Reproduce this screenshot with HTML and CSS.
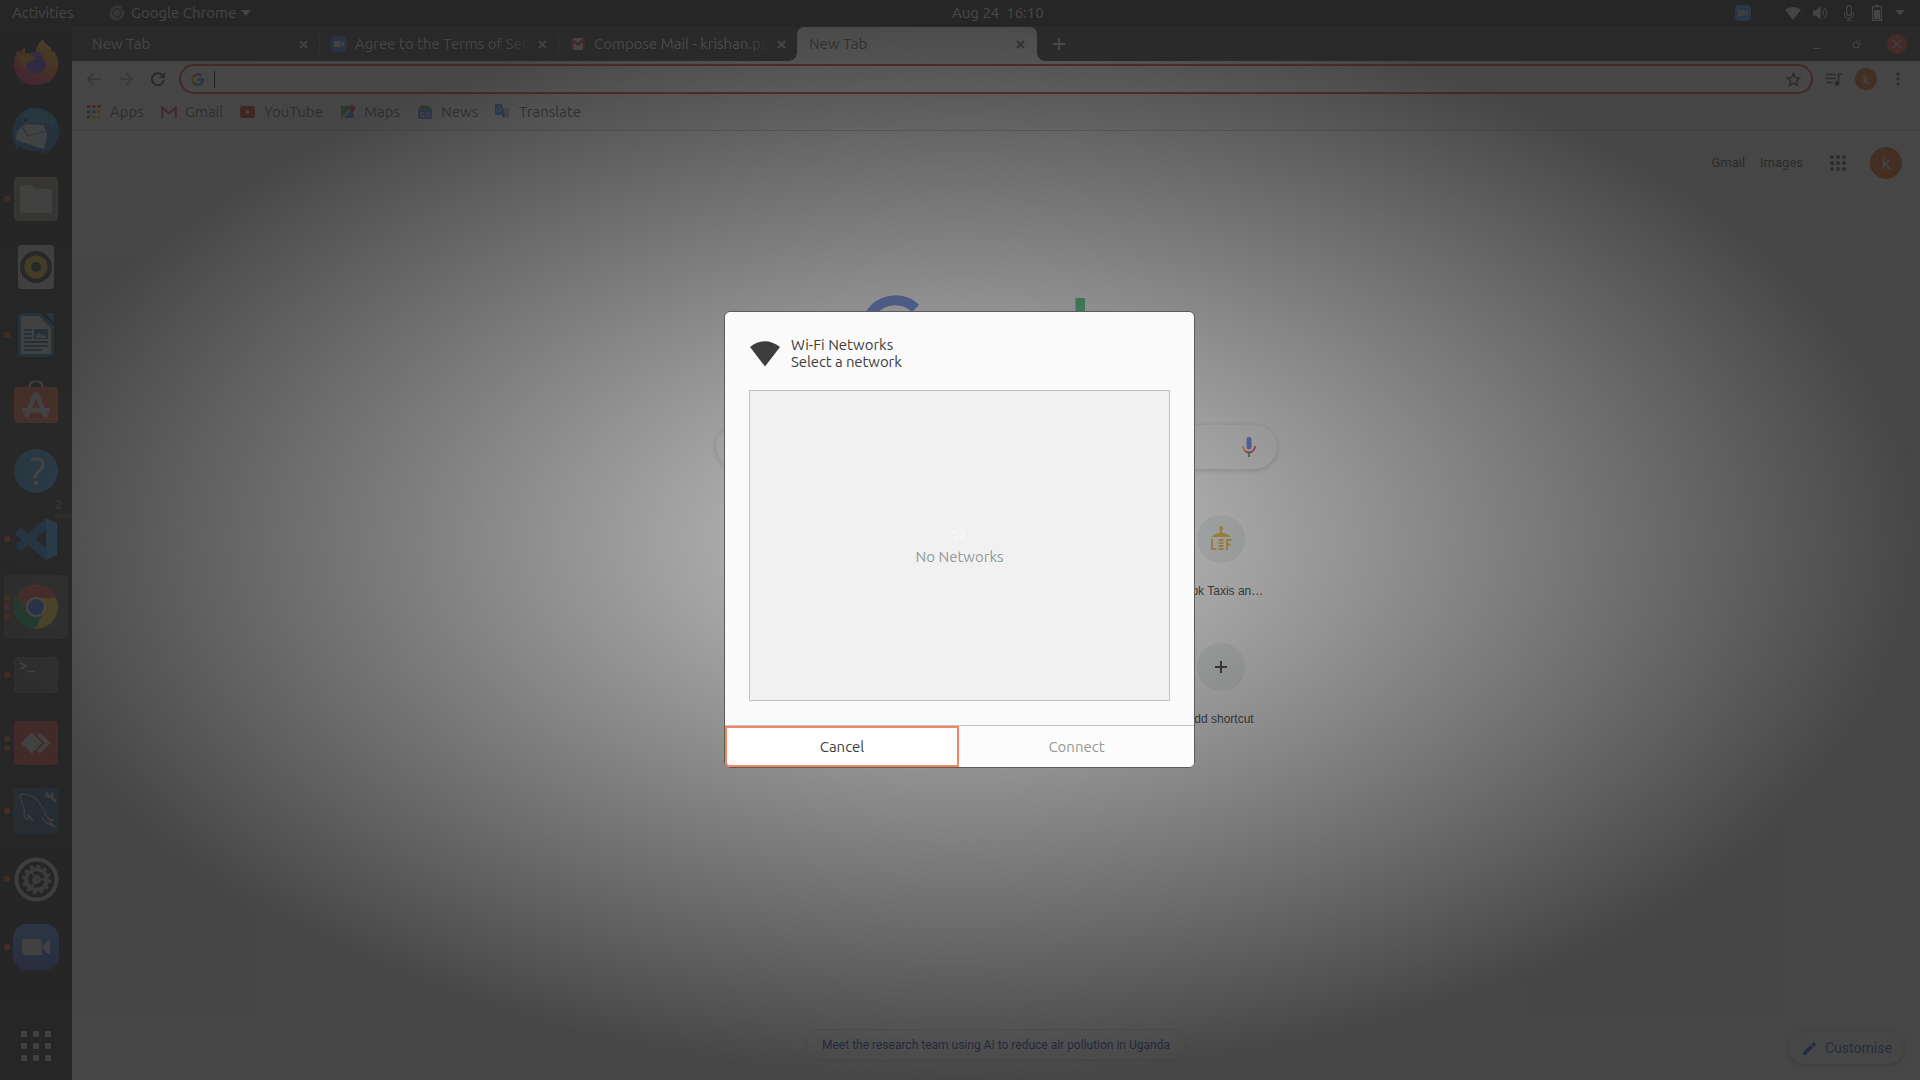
FILE: index.html
```html
<!DOCTYPE html>
<html lang="en">
<head>
<meta charset="utf-8">
<title>Wi-Fi Networks</title>
<link rel="stylesheet" href="styles.css">
</head>
<body>
<div class="desktop">
  <header class="panel">
    <span class="activities">Activities</span>
    <span class="app-menu">
      <svg width="16" height="16" viewBox="0 0 16 16"><circle cx="8" cy="8" r="7.500" fill="#8c8c8c"/><circle cx="8" cy="8" r="3.800" fill="none" stroke="#333" stroke-width="1.200"/><path d="M8 4.200h7M4.700 10 2 5M11.300 10 8 15.500" stroke="#333"/></svg>
      <span class="app-name">Google Chrome</span>
      <svg width="10" height="6" viewBox="0 0 10 6"><path d="M0 0h10L5 6z" fill="#eee"/></svg>
    </span>
    <span class="clock">Aug 24&nbsp; 16:10</span>
    <span class="tray">
      <svg class="t-zoom" width="16" height="16" viewBox="0 0 16 16"><rect width="16" height="16" rx="4.500" fill="#4a8cff"/><path d="M3 5h6.500v6H3zM10.300 7 13 5.200v5.600L10.300 9z" fill="#ccc"/></svg>
      <svg class="t-wifi" width="16" height="14" viewBox="0 0 16 14"><path d="M0 3.500Q8-1.500 16 3.500L8 14z" fill="#eee"/></svg>
      <svg class="t-vol" width="16" height="14" viewBox="0 0 16 14"><path d="M0 4.500h3L7.500 0v14L3 9.500H0z" fill="#eee"/><path d="M9.500 4.500q2 2.500 0 5M11.500 2q4.500 5 0 10" fill="none" stroke="#ccc" stroke-width="1.300"/></svg>
      <svg class="t-mic" width="10" height="16" viewBox="0 0 10 16"><rect x="2.700" y=".6" width="4.600" height="10" rx="2.300" fill="none" stroke="#eee" stroke-width="1.200"/><path d="M.6 7v2q0 4 4.400 4t4.400-4V7M5 13v2.500M2.500 15.400h5" fill="none" stroke="#ccc" stroke-width="1.200"/></svg>
      <svg class="t-bat" width="10" height="16" viewBox="0 0 10 16"><path d="M.6 1.600h8.800v13.800H.6z" fill="none" stroke="#eee" stroke-width="1.200"/><path d="M3 0h4v2H3zM2 5h6v9H2z" fill="#eee"/></svg>
      <svg class="t-arrow" width="10" height="6" viewBox="0 0 10 6"><path d="M0 0h10L5 5.500z" fill="#eee"/></svg>
    </span>
  </header>

  <div class="workspace">
    <nav class="dock">
      <div class="sign">2<small>Aven</small></div>
      <div class="slot firefox"><svg width="46" height="48" viewBox="0 0 46 48"><defs><linearGradient id="ff" x1=".8" y1="0" x2=".3" y2="1"><stop offset="0" stop-color="#ffe226"/><stop offset=".45" stop-color="#ff8a16"/><stop offset="1" stop-color="#e31587"/></linearGradient></defs><path d="M30 1c1 5 5 6 8 9l1 4 2-1c4 6 5 13 3 20-3 9-11 14-21 14C10 47 1 38 1 26c0-6 2-11 4-14l2 3 5-6v6l6 1c3-1 4-1 5-3 1-6 4-9 7-12z" fill="url(#ff)"/><circle cx="23" cy="26" r="9.500" fill="#7542e5"/><path d="M5 20q6-7 17-1 3 3-5 4-4 1-5 5-5-2-7-8z" fill="#ff9a1c"/><path d="M17 15q9-4 14 3-6-2-10 0z" fill="#a63fd0"/></svg></div>
      <div class="slot"><svg width="48" height="48" viewBox="0 0 48 48"><path d="M24 1c14 1 24 11 23 25-1 9-6 16-12 20l1-4q-4 5-9 4l3-3C19 45 9 42 6 38l1 7C-1 34-2 19 7 8q7-7 17-7z" fill="#1f75c4"/><path d="M12 6 18 0l3 2q8-1 14 3 11 5 12 19-3-6-6-8l1 9-8-9-12-1-10 3Q8 12 12 6z" fill="#2b9ad8"/><circle cx="13.500" cy="13" r="1.500" fill="#223"/><path d="m5 24 9-7 18 1 3 10-3 14-28-9z" fill="#dde1e6"/><path d="m9 19 7 10 17-5" fill="none" stroke="#789" stroke-width="1.300"/></svg></div>
      <div class="slot run1"><svg width="44" height="44" viewBox="0 0 44 44"><rect width="44" height="44" rx="5" fill="#a39d8a"/><rect x="1.500" y="1.500" width="41" height="41" rx="4" fill="#918b7a"/><path d="M6 11q0-3 3-3h9l4 4h13q3 0 3 3v18q0 3-3 3H9q-3 0-3-3z" fill="#d8d8d4"/></svg></div>
      <div class="slot"><svg width="36" height="44" viewBox="0 0 36 44"><rect width="36" height="44" rx="4" fill="#d7d3cb"/><circle cx="18" cy="22" r="16" fill="#333"/><circle cx="18" cy="22" r="11.500" fill="#ecc02b"/><circle cx="18" cy="22" r="5" fill="#333"/></svg></div>
      <div class="slot run1"><svg width="36" height="44" viewBox="0 0 36 44"><path d="M4 0h18l14 13v27q0 4-4 4H4q-4 0-4-4V4q0-4 4-4z" fill="#2187b5"/><path d="M3 5q0-2 2-2h16l12 12v24q0 2-2 2H5q-2 0-2-2z" fill="#ddd"/><path d="M27 0h9v10z" fill="#2187b5"/><path d="M6 17h8M6 21h8M6 25h8M6 29h24M6 33h24M6 37h18" stroke="#1b6a98" stroke-width="2"/><path d="M16 16h14v10H16z" fill="#1b6a98"/><path d="m17 25 4-6 3 4 2-2 3 4z" fill="#ccc"/></svg></div>
      <div class="slot"><svg width="44" height="44" viewBox="0 0 44 44"><path d="M15 9q0-9 7-9t7 9" fill="none" stroke="#ddd" stroke-width="2"/><rect y="6" width="44" height="36" rx="4" fill="#e8663a"/><path d="m12 36 9-22h2l9 22" fill="none" stroke="#ddd" stroke-width="4.500"/><rect x="8" y="27" width="28" height="4.500" rx="2" fill="#ddd"/></svg></div>
      <div class="slot"><svg width="44" height="44" viewBox="0 0 44 44"><circle cx="22" cy="22" r="22" fill="#3a94d6"/><path d="M17 11q12-4 12 5c0 6-8 6-8 13" fill="none" stroke="#ddd" stroke-width="2.800"/><circle cx="22" cy="34" r="2.300" fill="#ddd"/></svg></div>
      <div class="slot run1"><svg width="42" height="42" viewBox="0 0 42 42"><path d="m31 0 11 5v32l-11 5z" fill="#2f9be8"/><path d="M31 0v12L6 33l-5-4v-3z" fill="#1b79c0"/><path d="M31 42V30L6 10l-5 4v3z" fill="#2183cf"/></svg></div>
      <div class="slot active run3"><svg width="44" height="44" viewBox="0 0 44 44"><circle cx="22" cy="22" r="22" fill="#f4c932"/><path d="M3 11A22 22 0 0 1 42 13H22L13 27z" fill="#dd4b3e"/><path d="M3 11a22 22 0 0 0 18 33l9-17H13z" fill="#17a05d"/><circle cx="22" cy="22" r="10" fill="#eee"/><circle cx="22" cy="22" r="8" fill="#4270e0"/></svg></div>
      <div class="slot run1"><svg width="44" height="36" viewBox="0 0 44 36"><rect width="44" height="36" rx="4" fill="#6a6a6a"/><rect x="1" y="1" width="42" height="34" rx="3" fill="#5a5a5a"/><path d="m6 6 6 3-6 3M13 14.500h8" fill="none" stroke="#ddd" stroke-width="1.700"/></svg></div>
      <div class="slot run2"><svg width="44" height="44" viewBox="0 0 44 44"><rect width="44" height="44" rx="3" fill="#e0413a"/><path d="m7 22 10.500-10.500L28 22 17.500 32.500z" fill="#ddd"/><path d="m24.500 13 9.500 9-9.500 9" fill="none" stroke="#ddd" stroke-width="3.800"/></svg></div>
      <div class="slot run1"><svg width="46" height="46" viewBox="0 0 46 46"><rect width="46" height="46" rx="5" fill="#23567a"/><path d="M11 19q-3-4-3-8-3-4 1-5 9 0 15 6 7 8 8 14 3 6 9 6l-5 1 6 6-10-5-3-5M11 19q1 4 0 8 2 5 4 4l0-3 5 5-4-6" fill="none" stroke="#ccc" stroke-width="1.100"/><path d="M32 6q1-3 3-3l0 3 2 1 2-3q3 2 1 5l3 3q1 3-2 2l-4-4q-4 0-5-4z" fill="#bbb"/></svg></div>
      <div class="slot run1"><svg width="45" height="45" viewBox="0 0 46 46"><circle cx="23" cy="23" r="20.500" fill="none" stroke="#c8c8c8" stroke-width="4"/><circle cx="23" cy="23" r="10.500" fill="none" stroke="#b0b0b0" stroke-width="4"/><circle cx="23" cy="23" r="13.500" fill="none" stroke="#b0b0b0" stroke-width="3" stroke-dasharray="3.530 3.530"/><circle cx="23" cy="23" r="4.500" fill="#b0b0b0"/><path d="M23 23h9M23 23l-5-8M23 23l-5 8" stroke="#b0b0b0" stroke-width="2"/></svg></div>
      <div class="slot run1"><svg width="46" height="46" viewBox="0 0 46 46"><defs><linearGradient id="zm" x2="0" y2="1"><stop offset="0" stop-color="#4a8ff0"/><stop offset="1" stop-color="#3558c8"/></linearGradient></defs><rect width="46" height="46" rx="14" fill="url(#zm)"/><path d="M9 15h15q5 0 5 5v11H14q-5 0-5-5zM30.500 20.500 37 15v16l-6.500-5z" fill="#ddd"/></svg></div>
      <div class="apps-button"><svg width="30" height="30" viewBox="0 0 30 30" fill="#d8d8d8"><rect width="6" height="6" rx="1"/><rect x="12" width="6" height="6" rx="1"/><rect x="24" width="6" height="6" rx="1"/><rect y="12" width="6" height="6" rx="1"/><rect x="12" y="12" width="6" height="6" rx="1"/><rect x="24" y="12" width="6" height="6" rx="1"/><rect y="24" width="6" height="6" rx="1"/><rect x="12" y="24" width="6" height="6" rx="1"/><rect x="24" y="24" width="6" height="6" rx="1"/></svg></div>
    </nav>

    <main class="browser">
      <div class="tabs">
        <div class="tab"><span class="tab-title">New Tab</span><svg class="x" width="9" height="9" viewBox="0 0 9 9"><path d="m1 1 7 7M8 1 1 8"/></svg></div>
        <div class="tab"><svg class="fav" width="16" height="16" viewBox="0 0 16 16"><rect width="16" height="16" rx="4.500" fill="#4a7fe8"/><path d="M3 5h6.500v6H3zM10.300 7 13 5.200v5.600L10.300 9z" fill="#eee"/></svg><span class="tab-title fade">Agree to the Terms of Service</span><svg class="x" width="9" height="9" viewBox="0 0 9 9"><path d="m1 1 7 7M8 1 1 8"/></svg></div>
        <div class="tab"><svg class="fav" width="16" height="12" viewBox="0 0 16 12"><path d="M1 0h14v12H1z" fill="#eee"/><path d="M2 12V1.500l6 5 6-5V12" fill="none" stroke="#d93040" stroke-width="2.400"/></svg><span class="tab-title fade">Compose Mail - krishan.pandey</span><svg class="x" width="9" height="9" viewBox="0 0 9 9"><path d="m1 1 7 7M8 1 1 8"/></svg></div>
        <div class="tab current"><span class="tab-title">New Tab</span><svg class="x" width="9" height="9" viewBox="0 0 9 9"><path d="m1 1 7 7M8 1 1 8"/></svg></div>
        <svg class="plus" width="12" height="12" viewBox="0 0 12 12"><path d="M6 0v12M0 6h12" stroke="#ddd" stroke-width="1.800"/></svg>
        <div class="window-buttons">
          <svg width="8" height="14" viewBox="0 0 8 14"><path d="M0 11.500h8" stroke="#ddd"/></svg>
          <svg width="8" height="8" viewBox="0 0 8 8"><path d="M.6 2.600h5v5h-5z" fill="none" stroke="#ddd"/><path d="M2.500.5h5v5" fill="none" stroke="#999"/></svg>
          <svg width="20" height="20" viewBox="0 0 20 20"><circle cx="10" cy="10" r="10" fill="#e9463a"/><path d="m6 6 8 8m0-8-8 8" stroke="#ddd" stroke-width="1.400"/></svg>
        </div>
      </div>

      <div class="toolbar">
        <svg width="14" height="14" viewBox="0 0 14 14"><path d="M14 7H1M7 1 1 7l6 6" class="nav off"/></svg>
        <svg width="14" height="14" viewBox="0 0 14 14"><path d="M0 7h13M7 1l6 6-6 6" class="nav off"/></svg>
        <svg width="14" height="14" viewBox="0 0 14 14"><path d="M12 4A6 6 0 1 0 12.900 8" class="nav"/><path d="M14 0v6H8z" fill="#444"/></svg>
        <div class="omnibox">
          <svg width="13" height="13" viewBox="0 0 13 13" fill="none" stroke-width="2.400"><path d="M10.400 3A5.200 5.200 0 0 0 2 4" stroke="#ea4335"/><path d="M2 4a5.200 5.200 0 0 0 0 5" stroke="#fbbc05"/><path d="M2 9a5.200 5.200 0 0 0 7.500 1.800" stroke="#34a853"/><path d="M9.500 10.800A5 5 0 0 0 11.700 6.500H6.500" stroke="#4285f4"/></svg>
          <i class="caret"></i>
          <svg class="star" width="14" height="14" viewBox="0 0 14 14"><path d="m7 1.300 1.700 3.900 4.200.4-3.200 2.800 1 4.100L7 10.300l-3.700 2.200 1-4.100L1.100 5.600l4.200-.4z" fill="none" stroke="#444" stroke-width="1.300"/></svg>
        </div>
        <svg class="queue" width="16" height="13" viewBox="0 0 16 13"><path d="M0 1.500h10M0 5.500h10M0 9.500h6.500M12.500 10V1H16" fill="none" stroke="#444" stroke-width="1.600"/><circle cx="11" cy="10.500" r="2.400" fill="#444"/></svg>
        <span class="avatar small">k</span>
        <svg class="dots" width="4" height="14" viewBox="0 0 4 14" fill="#444"><circle cx="2" cy="2" r="1.600"/><circle cx="2" cy="7" r="1.600"/><circle cx="2" cy="12" r="1.600"/></svg>
      </div>

      <div class="bookmarks">
        <a class="b-apps"><svg width="14" height="14" viewBox="0 0 14 14"><path d="M0 1.500h3.200M5.200 1.500h3.200M10.400 1.500h3.200" stroke="#d93040" stroke-width="3"/><path d="M0 6.700h3.200" stroke="#23a050" stroke-width="3"/><path d="M5.200 6.700h3.200" stroke="#3b78e7" stroke-width="3"/><path d="M10.400 6.700h3.200" stroke="#f0b400" stroke-width="3"/><path d="M0 11.900h3.200" stroke="#23a050" stroke-width="3"/><path d="M5.200 11.900h3.200M10.400 11.900h3.200" stroke="#f0b400" stroke-width="3"/></svg>Apps</a>
        <a class="b-gmail"><svg width="16" height="12" viewBox="0 0 16 12"><path d="M1.200 12V1.500l6.800 6 6.800-6V12" fill="none" stroke="#d93040" stroke-width="2"/></svg>Gmail</a>
        <a class="b-yt"><svg width="15" height="12" viewBox="0 0 15 12"><rect width="15" height="12" rx="3" fill="#e02020"/><path d="m6 3.500 4 2.500-4 2.500z" fill="#fff"/></svg>YouTube</a>
        <a class="b-maps"><svg width="15" height="15" viewBox="0 0 15 15"><path d="M0 2h12v12H0z" fill="#34a853"/><path d="m3 14 8-9 2 9z" fill="#4a80e8"/><path d="m0 14 10-11 2 1L3 14z" fill="#ddd"/><path d="M11 10 8 5a3.200 3.200 0 1 1 6 0z" fill="#d93040"/></svg>Maps</a>
        <a class="b-news"><svg width="15" height="14" viewBox="0 0 15 14"><path d="m3 0 9 1v5H3z" fill="#ea4335"/><path d="m1 2 8-1 5 2v4H1z" fill="#34a853"/><rect y="4.500" width="14" height="9.500" rx="1" fill="#4a80e8"/><path d="M6 7.500H3v4h3V9.500M8 8h4M8 10.800h4" fill="none" stroke="#ddd"/></svg>News</a>
        <a class="b-tr"><svg width="15" height="15" viewBox="0 0 15 15"><path d="M6 4h7q1 0 1 1v8q0 1-1 1H9z" fill="#bbb"/><path d="M1 0h6l3 11H1q-1 0-1-1V1q0-1 1-1z" fill="#4a80e8"/><path d="m7 11 3 0-2 3z" fill="#2456c0"/><path d="M6 4.200a2.200 2.200 0 1 0 .3 1.600H4.500" fill="none" stroke="#ddd"/></svg>Translate</a>
      </div>

      <section class="page">
        <div class="account">
          <span>Gmail</span><span>Images</span>
          <svg width="16" height="16" viewBox="0 0 16 16" fill="#555"><circle cx="2" cy="2" r="2"/><circle cx="8" cy="2" r="2"/><circle cx="14" cy="2" r="2"/><circle cx="2" cy="8" r="2"/><circle cx="8" cy="8" r="2"/><circle cx="14" cy="8" r="2"/><circle cx="2" cy="14" r="2"/><circle cx="8" cy="14" r="2"/><circle cx="14" cy="14" r="2"/></svg>
          <span class="avatar">k</span>
        </div>
        <svg class="logo" width="272" height="92" viewBox="0 0 272 92"><path d="M5.500 35A29.800 29.800 0 0 1 55.600 13.300" fill="none" stroke="#7793ee" stroke-width="10"/><rect x="215.500" y="3" width="9.500" height="65" fill="#57ce87"/></svg>
        <div class="search">
          <svg width="14" height="20" viewBox="0 0 14 20" fill="none"><rect x="4.500" y="0" width="5" height="12.500" rx="2.500" fill="#7090f0"/><path d="M1 9q0 3 2 4.800" stroke="#e8b040" stroke-width="1.700"/><path d="M3 13.800q4 3.400 8 0Q13 12 13 9" stroke="#e04c68" stroke-width="1.700"/><path d="M7 16v4" stroke="#48b070" stroke-width="1.800"/></svg>
        </div>
        <div class="tiles">
          <div class="tile"><span class="disc"><svg width="22" height="26" viewBox="0 0 22 26"><circle cx="11" cy="2" r="2" fill="#e6bc4c"/><path d="M10 3h2v5h-2z" fill="#e6bc4c"/><path d="M1 11q4-4 10-4.500 6 .5 10 4.500z" fill="#e6bc4c"/><path d="M8.500 14h5M8.500 17h5M8.500 20h5M8.500 23h5" stroke="#e6bc4c" stroke-width="1.800"/><path d="M2 13v10h4.500M17 24V14h4.500M17 18.500h4" fill="none" stroke="#e6bc4c" stroke-width="2"/></svg></span><span>Book Taxis an…</span></div>
          <div class="tile"><span class="disc"><svg width="12" height="12" viewBox="0 0 12 12"><path d="M6 0v12M0 6h12" stroke="#444" stroke-width="2"/></svg></span><span>Add shortcut</span></div>
        </div>
        <div class="promo">Meet the research team using AI to reduce air pollution in Uganda</div>
        <div class="customise"><svg width="13" height="13" viewBox="0 0 13 13" fill="#1558c8"><path d="m0 10.200 7.500-7.500 2.800 2.800L2.800 13H0zM8.300 1.900 9.800.4q.6-.6 1.200 0l1.600 1.600q.6.600 0 1.200l-1.500 1.500z"/></svg>Customise</div>
      </section>
    </main>
  </div>

  <div class="shade">
    <div class="dialog">
      <div class="dialog-head">
        <svg width="30" height="26" viewBox="0 0 30 26"><path d="M0 6Q15-5.500 30 6L15 25.500z" fill="#3d3d3d"/></svg>
        <div class="heading"><div class="h1">Wi-Fi Networks</div><div class="h2">Select a network</div></div>
      </div>
      <div class="list">
        <svg width="13" height="13" viewBox="0 0 13 13"><circle cx="6.500" cy="6.500" r="5.200" fill="none" stroke="#f8f8f8" stroke-width="1.800" stroke-dasharray="6 2.170"/></svg>
        <div class="none">No Networks</div>
      </div>
      <div class="actions"><button class="cancel">Cancel</button><button class="connect" disabled>Connect</button></div>
    </div>
  </div>
</div>
</body>
</html>
```
FILE: styles.css
```css
* { box-sizing: border-box; }
body { margin: 0; overflow: hidden; font-family: Ubuntu, "Noto Sans", sans-serif; font-size: 15px; }
svg { display: block; flex: none; }

.desktop { position: relative; width: 1920px; height: 1080px; display: flex; flex-direction: column; overflow: hidden; background: #252525; }

/* Top panel */
.panel { height: 27px; flex: none; display: flex; align-items: center; background: #252525; color: #f2f2f2; border-bottom: 1px solid #3a3a3a; }
.activities, .app-name, .clock { padding-bottom: 2px; }
.activities { width: 98px; padding-left: 12px; }
.app-menu { width: 854px; padding-left: 11px; display: flex; align-items: center; gap: 6px; }
.app-name { width: 104px; white-space: nowrap; }
.clock { flex: 1; white-space: nowrap; }
.tray { display: flex; align-items: center; width: 185px; }
.t-wifi { margin-left: 34px; }
.t-vol { margin-left: 12px; }
.t-mic { margin-left: 15px; }
.t-bat { margin-left: 18px; }
.t-arrow { margin-left: 13px; }

.workspace { flex: 1; display: flex; min-height: 0; }

/* Dock */
.dock { position: relative; width: 72px; flex: none; display: flex; flex-direction: column; padding-top: 2px; background: linear-gradient(#222, #262626 30%, #343431 38%, #2c2c29 60%, #222 85%, #282828); }
.slot { position: relative; height: 68px; flex: none; display: flex; align-items: center; justify-content: center; }
.slot.firefox { padding-bottom: 2px; }
.slot.active::after { content: ""; position: absolute; inset: 2px 4px; border-radius: 4px; background: #fff; opacity: .19; }
.slot.active svg { position: relative; z-index: 1; }
.slot[class*="run"]::before { content: ""; position: absolute; z-index: 1; left: 4px; top: 31px; width: 6px; height: 6px; border-radius: 3px; background: #e95420; }
.slot.run3::before { box-shadow: 0 -9px #e95420, 0 9px #e95420; }
.slot.run2::before { top: 27px; box-shadow: 0 9px #e95420; }
.apps-button { margin-top: auto; height: 68px; display: flex; align-items: center; justify-content: center; }
.sign { position: absolute; left: 55px; top: 472px; color: #707070; font: bold 13px/11px "Liberation Sans", sans-serif; }
.sign small { display: block; font-size: 7px; }

/* Browser chrome */
.browser { flex: 1; display: flex; flex-direction: column; background: #fff; min-width: 0; }
.tabs { height: 34px; flex: none; display: flex; align-items: center; background: #3c3c3c; padding-left: 9px; color: #eee; }
.tab { width: 239px; height: 34px; display: flex; align-items: center; padding: 0 12px 0 11px; position: relative; }
.tab:not(.current)::after { content: ""; position: absolute; right: 0; top: 7px; height: 20px; width: 1px; background: #666; }
.tab:nth-child(3)::after { display: none; }
.tab:nth-child(3) { width: 238px; padding-right: 11px; }
.tab-title { flex: 1; white-space: nowrap; overflow: hidden; margin-right: 9px; padding-bottom: 2px; }
.fade { margin-right: 6px; -webkit-mask-image: linear-gradient(90deg, #000 85%, transparent); mask-image: linear-gradient(90deg, #000 85%, transparent); }
.fav { margin-right: 8px; }
.x { fill: none; stroke: #ddd; stroke-width: 1.8; }
.current { width: 240px; background: #f6f6f6; color: #555; border-radius: 7px 7px 0 0; padding-left: 12px; }
.current::before { content: ""; position: absolute; left: -8px; right: -8px; bottom: 0; height: 8px; background: radial-gradient(circle at 0 0, transparent 7.5px, #f6f6f6 8px) left / 8px 8px no-repeat, radial-gradient(circle at 100% 0, transparent 7.5px, #f6f6f6 8px) right / 8px 8px no-repeat; }
.current .x { stroke: #555; }
.plus { margin-left: 16px; }
.window-buttons { margin-left: auto; display: flex; align-items: center; gap: 32px; padding-right: 13px; }
.window-buttons svg:last-child { margin-left: -6px; }

.toolbar { height: 35px; flex: none; display: flex; align-items: center; padding: 1px 20px 0 15px; gap: 18px; background: #f8f8f8; }
.nav { fill: none; stroke: #444; stroke-width: 2; }
.nav.off { stroke: #aaa; }
.omnibox { flex: 1; height: 30px; margin-left: -4px; border: 2px solid #e2382b; border-radius: 15px; display: flex; align-items: center; padding: 0 10px; background: #fff; }
.caret { width: 1px; height: 17px; background: #000; margin-left: 10px; }
.star { margin-left: auto; width: 15px; height: 15px; }
.queue { margin-left: -5px; }
.avatar { width: 32px; height: 32px; border-radius: 50%; background: #ee5f1c; color: #eee; display: flex; align-items: center; justify-content: center; font: 17px Roboto, sans-serif; }
.avatar.small { width: 22px; height: 22px; font-size: 13px; margin-left: -5px; }
.dots { margin-left: 1px; }

.bookmarks { height: 35px; flex: none; display: flex; align-items: center; padding: 0 15px 3px; background: #f8f8f8; border-bottom: 1px solid #c4c4c4; color: #555; }
.bookmarks a { display: flex; align-items: center; gap: 9px; white-space: nowrap; }
.b-apps { width: 74px; }
.b-gmail { width: 79px; }
.b-yt { width: 101px; }
.bookmarks .b-gmail, .bookmarks .b-maps, .bookmarks .b-news { gap: 8px; }
.b-maps { width: 77px; }
.b-news { width: 77px; }

/* New tab page */
.page { flex: 1; display: flex; flex-direction: column; align-items: center; position: relative; font-family: Roboto, sans-serif; color: #444; }
.account { align-self: stretch; height: 63px; display: flex; align-items: center; justify-content: flex-end; padding-right: 18px; font-size: 13px; flex: none; }
.account span + span { margin-left: 15px; }
.account svg { margin: 0 24px 0 27px; }
.account .avatar { margin: 0; }
.logo { margin-top: 101px; }
.search { width: 561px; height: 44px; margin-top: 38px; border-radius: 22px; box-shadow: 0 1px 5px rgba(32,33,36,.22); display: flex; align-items: center; justify-content: flex-end; padding-right: 21px; }
.tiles { width: 562px; margin-top: 46px; display: flex; flex-direction: column; align-items: flex-end; font: 12px "Liberation Sans", sans-serif; }
.tile { width: 112px; height: 128px; display: flex; flex-direction: column; align-items: center; gap: 21px; }
.tile > span:last-child { margin-left: -2px; }
.disc { width: 48px; height: 48px; border-radius: 50%; background: #eef2f2; display: flex; align-items: center; justify-content: center; }
.promo { margin-top: auto; margin-bottom: 19px; width: 382px; height: 32px; border: 1px solid #dadce0; border-radius: 16px; display: flex; align-items: center; justify-content: center; font-size: 12px; color: #24309c; white-space: nowrap; }
.customise { position: absolute; right: 16px; bottom: 16px; width: 115px; height: 32px; border-radius: 16px; background: #fff; box-shadow: 0 1px 4px rgba(0,0,0,.35); display: flex; align-items: center; gap: 9px; padding-left: 14px; font-size: 14px; color: #1558c8; }

/* Modal vignette and dialog */
.shade { position: absolute; z-index: 5; inset: 0; display: flex; padding: 311px 0 0 724px; align-items: flex-start; background: radial-gradient(960px 540px at center, rgba(38,38,38,.25), rgba(38,38,38,.85)); }
.dialog { width: 471px; height: 457px; border: 1px solid #5c5c5c; border-radius: 6px; background: #fafafa; color: #3d3d3d; display: flex; flex-direction: column; overflow: hidden; }
.dialog-head { display: flex; gap: 11px; padding: 24px 25px 0; height: 78px; align-items: flex-start; }
.dialog-head svg { margin-top: 5px; }
.heading { line-height: 17px; white-space: nowrap; }
.h1, .h2 { height: 17px; }
.h2 { letter-spacing: -.1px; }
.list { width: 421px; height: 311px; margin: 0 0 0 24px; border: 1px solid #c2c2c2; background: #f1f1f1; display: flex; flex-direction: column; align-items: center; padding-top: 137px; gap: 6px; }
.list svg { margin-right: 2px; }
.none { color: #929a9a; line-height: 20px; }
.actions { display: flex; margin-top: auto; height: 42px; border-top: 1px solid #c2c2c2; }
.actions button { flex: 1; border: 0; padding: 0; background: #fcfcfc; font: inherit; color: #929a92; }
.actions .cancel { flex: none; width: 234px; border: 2px solid #f0865f; background: #fff; color: #3d3d3d; border-radius: 0 0 0 5px; }
```
